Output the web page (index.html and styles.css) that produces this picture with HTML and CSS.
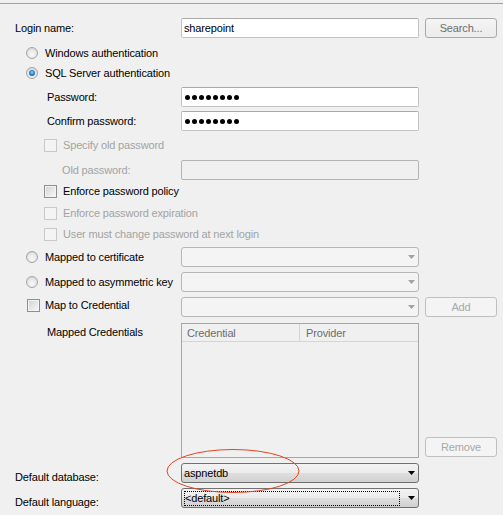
FILE: index.html
```html
<!DOCTYPE html>
<html>
<head>
<meta charset="utf-8">
<link rel="stylesheet" href="styles.css">
</head>
<body>
<div class="page">
  <div class="topline"></div>
  <div class="form">
    <div class="row mt14">
      <div class="lbl ind0">Login name:</div>
      <div class="tb">sharepoint</div>
      <div class="btn">Search...</div>
    </div>
    <div class="row h21 mt4">
      <div class="lbl ind1"><span class="radio"></span>Windows authentication</div>
    </div>
    <div class="row">
      <div class="lbl ind1"><span class="radio on"></span>SQL Server authentication</div>
    </div>
    <div class="row mt4">
      <div class="lbl ind2">Password:</div>
      <div class="tb"><span class="dots"><i></i><i></i><i></i><i></i><i></i><i></i><i></i><i></i></span></div>
    </div>
    <div class="row mt4">
      <div class="lbl ind2">Confirm password:</div>
      <div class="tb"><span class="dots"><i></i><i></i><i></i><i></i><i></i><i></i><i></i><i></i></span></div>
    </div>
    <div class="row mt4 dis">
      <div class="lbl ind3 wide"><span class="chk off"></span>Specify old password</div>
    </div>
    <div class="row mt5 dis">
      <div class="lbl ind4">Old password:</div>
      <div class="tb tbdis"></div>
    </div>
    <div class="row mt1">
      <div class="lbl ind3 wide"><span class="chk"></span>Enforce password policy</div>
    </div>
    <div class="row mt2 dis">
      <div class="lbl ind3 wide"><span class="chk off"></span>Enforce password expiration</div>
    </div>
    <div class="row mt1 dis">
      <div class="lbl ind3 wide"><span class="chk off"></span>User must change password at next login</div>
    </div>
    <div class="row mt3">
      <div class="lbl ind1"><span class="radio"></span>Mapped to certificate</div>
      <div class="cb cbdis"><span></span><svg width="7" height="4" viewBox="0 0 7 4"><path d="M0 0h7L3.5 4z" fill="#a2a2a2"/></svg></div>
    </div>
    <div class="row mt5">
      <div class="lbl ind1"><span class="radio"></span>Mapped to asymmetric key</div>
      <div class="cb cbdis"><span></span><svg width="7" height="4" viewBox="0 0 7 4"><path d="M0 0h7L3.5 4z" fill="#a2a2a2"/></svg></div>
    </div>
    <div class="row mt5">
      <div class="lbl ind5 raise"><span class="chk"></span>Map to Credential</div>
      <div class="cb cbdis"><span></span><svg width="7" height="4" viewBox="0 0 7 4"><path d="M0 0h7L3.5 4z" fill="#a2a2a2"/></svg></div>
      <div class="btn btndis">Add</div>
    </div>
    <div class="row listrow mt6">
      <div class="lbl ind2 top">Mapped Credentials</div>
      <div class="list">
        <div class="lhead">
          <div class="col c1">Credential</div>
          <div class="col c2">Provider</div>
        </div>
      </div>
      <div class="btn btndis">Remove</div>
    </div>
    <div class="row mt5">
      <div class="lbl ind0 drop">Default database:</div>
      <div class="cb cbon"><span>aspnetdb</span><svg width="7" height="4" viewBox="0 0 7 4"><path d="M0 0h7L3.5 4z" fill="#000"/></svg></div>
    </div>
    <div class="row mt5">
      <div class="lbl ind0 drop">Default language:</div>
      <div class="cb cbon"><span class="focus">&lt;default&gt;</span><svg width="7" height="4" viewBox="0 0 7 4"><path d="M0 0h7L3.5 4z" fill="#000"/></svg></div>
    </div>
  </div>
  <svg class="mark" width="136" height="48" viewBox="0 0 136 48"><ellipse cx="67" cy="23" rx="66" ry="21.5" fill="none" stroke="#e2461f" stroke-width="1"/></svg>
</div>
</body>
</html>
```
FILE: styles.css
```css
html, body {
  margin: 0;
  padding: 0;
  background: #f0f0f0;
}
body {
  font-family: "Liberation Sans", Arial, sans-serif;
  font-size: 11px;
  letter-spacing: -0.15px;
  color: #000;
}
.page {
  position: relative;
  width: 503px;
  height: 515px;
  overflow: hidden;
}
.topline {
  margin-top: 3px;
  border-top: 1px solid #a0a0a0;
}
.form {
  display: flex;
  flex-direction: column;
}
.row {
  display: flex;
  align-items: center;
  height: 20px;
  flex: none;
}
.h21 { height: 21px; }
.mt1 { margin-top: 1px; }
.mt2 { margin-top: 2px; }
.mt3 { margin-top: 3px; }
.mt4 { margin-top: 4px; }
.mt5 { margin-top: 5px; }
.mt6 { margin-top: 6px; }
.mt14 { margin-top: 14px; }

.lbl {
  width: 181px;
  flex: none;
  box-sizing: border-box;
  display: flex;
  align-items: center;
  white-space: nowrap;
}
.lbl.wide { width: 300px; }
.lbl.drop { padding-top: 8px; }
.lbl.raise { padding-bottom: 4px; }
.ind0 { padding-left: 15px; }
.ind1 { padding-left: 26px; }
.ind2 { padding-left: 47px; }
.ind3 { padding-left: 44px; }
.ind4 { padding-left: 62px; }
.ind5 { padding-left: 27px; }
.dis .lbl { color: #a3a3a3; }

.radio {
  width: 12px;
  height: 12px;
  box-sizing: border-box;
  border-radius: 50%;
  border: 1px solid #a4a4a4;
  background: radial-gradient(circle at 50% 65%, #fafafa 0, #e6e6e6 55%, #cdcdcd 100%);
  margin-right: 7px;
  position: relative;
  flex: none;
}
.radio.on::after {
  content: "";
  position: absolute;
  left: 2px;
  top: 2px;
  width: 6px;
  height: 6px;
  border-radius: 50%;
  background: radial-gradient(circle at 50% 40%, #8fd6ff 0, #2a8ad6 45%, #0e3f73 100%);
}

.chk {
  width: 13px;
  height: 13px;
  box-sizing: border-box;
  border: 1px solid #8e8f8f;
  background: linear-gradient(135deg, #cdd0d4 0%, #eeeeee 70%, #f8f8f8 100%);
  box-shadow: inset 0 0 0 1px #f3f3f3;
  margin-right: 6px;
  flex: none;
}
.chk.off {
  border-color: #c8c8c8;
  background: #f4f4f4;
  box-shadow: none;
}
.ind5 .chk { margin-right: 5px; }

.tb {
  width: 238px;
  height: 20px;
  box-sizing: border-box;
  border: 1px solid #c3c3c3;
  border-top-color: #a9a9a9;
  border-radius: 2px;
  background: #fff;
  padding-left: 2px;
  display: flex;
  align-items: center;
  flex: none;
}
.tb.tbdis {
  background: #f0f0f0;
  border-color: #b4b4b4;
}
.dots {
  display: flex;
  gap: 2px;
  padding-left: 1px;
}
.dots i {
  display: block;
  width: 5px;
  height: 5px;
  border-radius: 50%;
  background: #000;
}

.btn {
  width: 72px;
  height: 20px;
  box-sizing: border-box;
  margin-left: 6px;
  border: 1px solid #a9a9a9;
  border-radius: 3px;
  background: linear-gradient(#f4f4f4, #ebebeb);
  color: #6d6d6d;
  display: flex;
  align-items: center;
  justify-content: center;
  flex: none;
}
.btn.btndis {
  color: #a8a8a8;
  border-color: #c0c0c0;
  background: #f4f4f4;
}

.cb {
  width: 238px;
  height: 20px;
  box-sizing: border-box;
  border-radius: 3px;
  display: flex;
  align-items: center;
  justify-content: space-between;
  padding: 0 3px 0 2px;
  flex: none;
}
.cb svg { display: block; flex: none; }
.cbdis {
  border: 1px solid #b6b6b6;
  background: #f4f4f4;
}
.cbon {
  border: 1px solid #707070;
  background: linear-gradient(#f3f3f3 0%, #ebebeb 50%, #dedede 52%, #d0d0d0 100%);
}
.focus {
  width: 216px;
  height: 15px;
  box-sizing: border-box;
  border: 1px dotted #000;
  display: flex;
  align-items: center;
  padding-left: 0;
}

.listrow {
  height: 135px;
  align-items: stretch;
}
.lbl.top {
  align-items: flex-start;
  padding-top: 3px;
}
.list {
  width: 238px;
  box-sizing: border-box;
  border: 1px solid #a6a6a6;
  background: #f0f0f0;
  flex: none;
}
.lhead {
  display: flex;
  height: 17px;
  border-bottom: 1px solid #d5d5d5;
  color: #6d6d6d;
}
.col {
  display: flex;
  align-items: center;
  padding-left: 5px;
  box-sizing: border-box;
}
.c1 {
  width: 118px;
  border-right: 1px solid #d5d5d5;
}
.c2 { flex: 1; padding-left: 6px; }
.listrow .btn {
  align-self: flex-end;
  margin-bottom: 1px;
}

.mark {
  position: absolute;
  left: 166px;
  top: 448px;
}
```
